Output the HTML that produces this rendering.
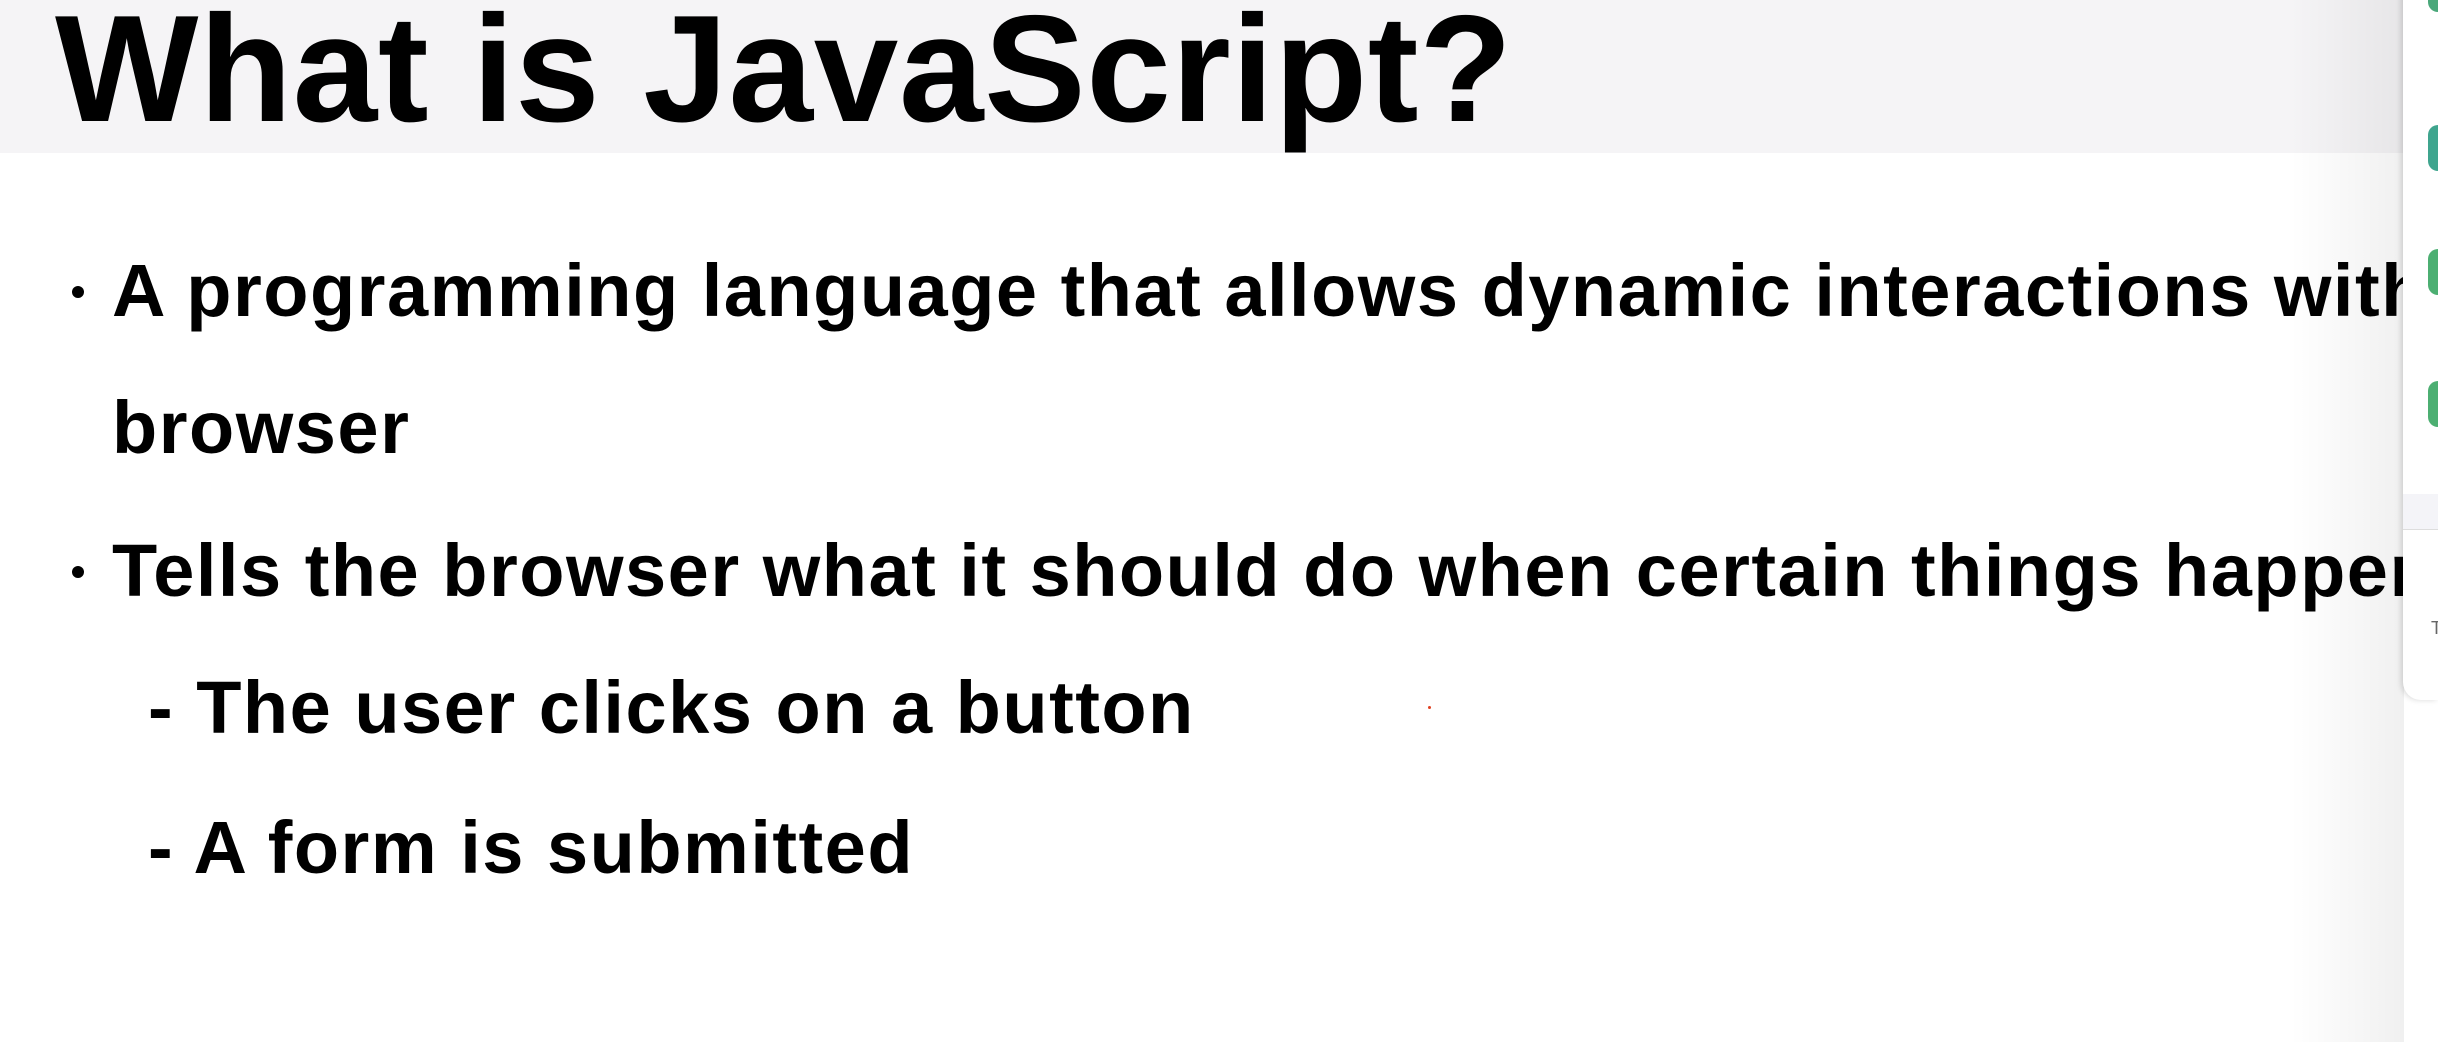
<!DOCTYPE html>
<html><head><meta charset="utf-8"><style>
html,body{margin:0;padding:0}
body{width:2438px;height:1042px;position:relative;overflow:hidden;background:#fff;font-family:"Liberation Sans",Arial,sans-serif;font-weight:bold;color:#000}
.clip{position:absolute;left:0;top:0;width:2404px;height:1042px;overflow:hidden}
.hdr{position:absolute;left:0;top:0;width:2438px;height:153px;background:#f5f4f6}
.t{position:absolute;white-space:nowrap;line-height:1}
.title{left:55px;top:-7px;font-size:152px;letter-spacing:0.7px}
.b{font-size:74px;left:112px;letter-spacing:1.5px}
.dot{position:absolute;width:12px;height:12px;border-radius:50%;background:#000}
.shade{position:absolute;left:2290px;top:0;width:114px;height:1042px;background:linear-gradient(to right,rgba(0,0,0,0),rgba(0,0,0,0.06))}
.panel{position:absolute;left:2403px;top:-20px;width:35px;height:720px;background:#fff;border-radius:0 0 0 18px;box-shadow:-2px 0 6px rgba(0,0,0,.15);overflow:hidden}
.pill{position:absolute;left:25px;width:20px;height:46px;border-radius:10px}
</style></head><body>
<div class="hdr"></div>
<div class="clip">
<div class="t title">What is JavaScript?</div>
<div class="dot" style="left:72px;top:286px"></div>
<div class="t b" style="top:254px">A programming language that allows dynamic interactions with the</div>
<div class="t b" style="top:391px">browser</div>
<div class="dot" style="left:72px;top:566px"></div>
<div class="t b" style="top:534px">Tells the browser what it should do when certain things happen</div>
<div class="t b" style="top:671px;left:148px">- The user clicks on a button</div>
<div class="t b" style="top:811px;left:148px">- A form is submitted</div>
<div style="position:absolute;left:1428px;top:706px;width:3px;height:3px;background:#e04020;border-radius:50%"></div>
<div class="shade"></div>
</div>
<div class="panel">
 <div class="pill" style="top:0;height:32px;background:#4aa87a"></div>
 <div class="pill" style="top:145px;background:#3fa58e"></div>
 <div class="pill" style="top:269px;background:#4caf72"></div>
 <div class="pill" style="top:401px;background:#4caf72"></div>
 <div style="position:absolute;left:0;top:514px;width:35px;height:35px;background:#f4f4f8;border-bottom:1px solid #ddd"></div>
 <div style="position:absolute;left:28px;top:638px;font-size:18px;font-weight:normal;color:#666">T</div>
</div>
</body></html>
